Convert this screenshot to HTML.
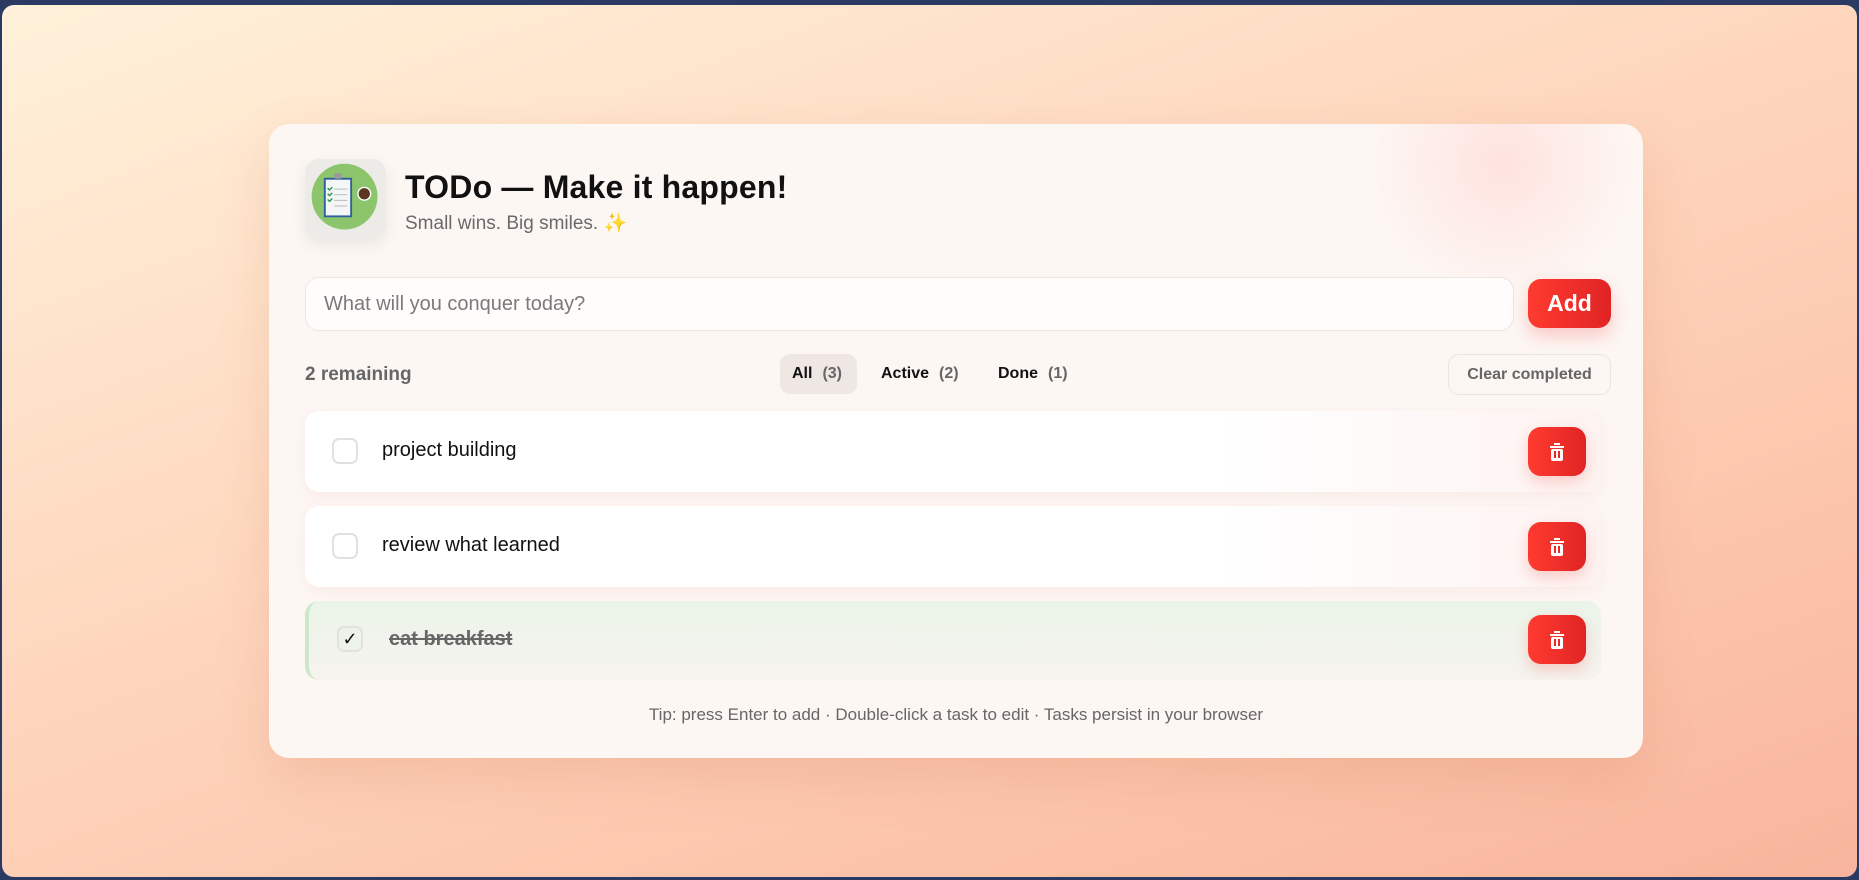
<!DOCTYPE html>
<html><head><meta charset="utf-8">
<style>
*{box-sizing:border-box;margin:0;padding:0}
html,body{width:1859px;height:880px;overflow:hidden;background:#2b3a63}
.win{position:absolute;left:2px;top:5px;right:2px;bottom:3px;border-radius:12px;
background:linear-gradient(160deg,#fff1da 0%,#fed9c0 40%,#fbc2a8 80%,#f8b49c 100%);overflow:hidden}
.card{position:absolute;left:267px;top:119px;width:1374px;height:634px;border-radius:20px;
background:#fdf7f4;box-shadow:0 20px 50px rgba(200,110,80,.18);overflow:hidden;font-family:"Liberation Sans",sans-serif}
.glow{position:absolute;right:-10px;top:-90px;width:300px;height:260px;border-radius:50%;
background:radial-gradient(circle,rgba(255,210,205,.55),rgba(255,220,220,0) 70%)}
.c{position:absolute;left:0;top:-5px;width:100%;height:100%}
.logo{position:absolute;left:36px;top:40px;width:81px;height:79px;border-radius:14px;background:#ecebe8;box-shadow:0 6px 16px rgba(0,0,0,.08)}
h1{position:absolute;left:136px;top:50px;font-size:32px;font-weight:bold;color:#111;letter-spacing:.2px}
.sub{position:absolute;left:136px;top:92px;font-size:19px;color:#6a6a6a}
.inp{position:absolute;left:36px;top:158px;width:1209px;height:54px;border:1px solid #ece6e2;border-radius:14px;background:#fffcfb;
font-size:20px;color:#7a7a7a;padding:15px 18px}
.add{position:absolute;left:1259px;top:160px;width:83px;height:49px;border-radius:13px;background:linear-gradient(90deg,#ff3b30,#e02424);
color:#fff;font-weight:900;font-size:23px;text-align:center;line-height:49px;box-shadow:0 8px 18px rgba(240,60,50,.25)}
.rem{position:absolute;left:36px;top:245px;font-size:19px;font-weight:bold;color:#666}
.f{position:absolute;top:235px;height:40px;line-height:40px;font-size:16px;font-weight:bold;color:#111;border-radius:10px;padding:0 12px}
.f span{color:#666;margin-left:10px}
.clear{position:absolute;left:1179px;top:235px;width:163px;height:41px;border:1px solid #ebe4e1;border-radius:11px;
font-size:16px;font-weight:bold;color:#666;text-align:center;line-height:39px}
.item{position:absolute;left:36px;width:1296px;height:81px;border-radius:14px;background:linear-gradient(90deg,#fff 70%,#fdf3f1);
box-shadow:0 4px 14px rgba(220,150,130,.12)}
.cb{position:absolute;left:27px;top:27px;width:26px;height:26px;border:2px solid #e3e0de;border-radius:7px;background:#fff}
.txt{position:absolute;left:77px;top:28px;font-size:20px;color:#111}
.del{position:absolute;left:1223px;top:16px;width:58px;height:49px;border-radius:13px;background:linear-gradient(90deg,#ff3b30,#e02424);
box-shadow:0 6px 14px rgba(240,60,50,.22)}
.del svg{position:absolute;left:21px;top:16px}
.tip{position:absolute;left:0;right:0;top:586px;text-align:center;font-size:17px;color:#666}
</style></head><body>
<div class="win">
<div class="card">
<div class="glow"></div>
<div class="c">
<div class="logo"><svg width="81" height="79" viewBox="0 0 84 84">
<circle cx="41" cy="40" r="35" fill="#8cc56c"/>
<rect x="19" y="20" width="30" height="42" rx="1" fill="#2f5f9e"/>
<rect x="21" y="22" width="26" height="38" fill="#f4f6f8"/>
<rect x="30" y="15" width="8" height="6" rx="2" fill="#999"/>
<g stroke="#2a9a4a" stroke-width="1.5" fill="none"><path d="M23 31l2 2 3-3M23 37l2 2 3-3M23 43l2 2 3-3"/></g>
<g stroke="#bbb" stroke-width="1"><path d="M30 32h14M30 38h14M30 44h14M30 50h14"/></g>
<circle cx="62" cy="37" r="7.5" fill="#fff"/><circle cx="62" cy="37" r="6" fill="#5a3520"/>
</svg></div>
<h1>TODo — Make it happen!</h1>
<div class="sub">Small wins. Big smiles. <span style="color:#f5a623">✨</span></div>
<div class="inp">What will you conquer today?</div>
<div class="add">Add</div>
<div class="rem">2 remaining</div>
<div class="f" style="left:511px;background:#efe7e4;width:77px">All<span>(3)</span></div>
<div class="f" style="left:600px">Active<span>(2)</span></div>
<div class="f" style="left:717px">Done<span>(1)</span></div>
<div class="clear">Clear completed</div>
<div class="item" style="top:292px"><div class="cb"></div><div class="txt">project building</div><div class="del"><svg width="16" height="18" viewBox="0 0 16 18"><rect x="5" y="0" width="6" height="2" fill="#fff"/><rect x="1" y="3" width="14" height="2" fill="#fff"/><rect x="2" y="6" width="12" height="12" rx="2" fill="#fff"/><rect x="5" y="8" width="2" height="7" fill="#e52a25"/><rect x="9" y="8" width="2" height="7" fill="#e52a25"/></svg></div></div>
<div class="item" style="top:387px"><div class="cb"></div><div class="txt">review what learned</div><div class="del"><svg width="16" height="18" viewBox="0 0 16 18"><rect x="5" y="0" width="6" height="2" fill="#fff"/><rect x="1" y="3" width="14" height="2" fill="#fff"/><rect x="2" y="6" width="12" height="12" rx="2" fill="#fff"/><rect x="5" y="8" width="2" height="7" fill="#e52a25"/><rect x="9" y="8" width="2" height="7" fill="#e52a25"/></svg></div></div>
<div class="item" style="top:482px;height:79px;background:linear-gradient(180deg,#ebf4e9,#f6f3ef);border-left:4px solid #cde8c8;box-shadow:none">
<div class="cb" style="left:28px;top:25px;background:#eef3ea;color:#111;font-size:18px;line-height:22px;text-align:center">✓</div>
<div class="txt" style="left:80px;top:27px;color:#666;font-weight:bold;text-decoration:line-through">eat breakfast</div>
<div class="del" style="left:1219px;top:14px"><svg width="16" height="18" viewBox="0 0 16 18"><rect x="5" y="0" width="6" height="2" fill="#fff"/><rect x="1" y="3" width="14" height="2" fill="#fff"/><rect x="2" y="6" width="12" height="12" rx="2" fill="#fff"/><rect x="5" y="8" width="2" height="7" fill="#e52a25"/><rect x="9" y="8" width="2" height="7" fill="#e52a25"/></svg></div></div>
<div class="tip">Tip: press Enter to add · Double-click a task to edit · Tasks persist in your browser</div>
</div>
</div>
</div>
</body></html>
